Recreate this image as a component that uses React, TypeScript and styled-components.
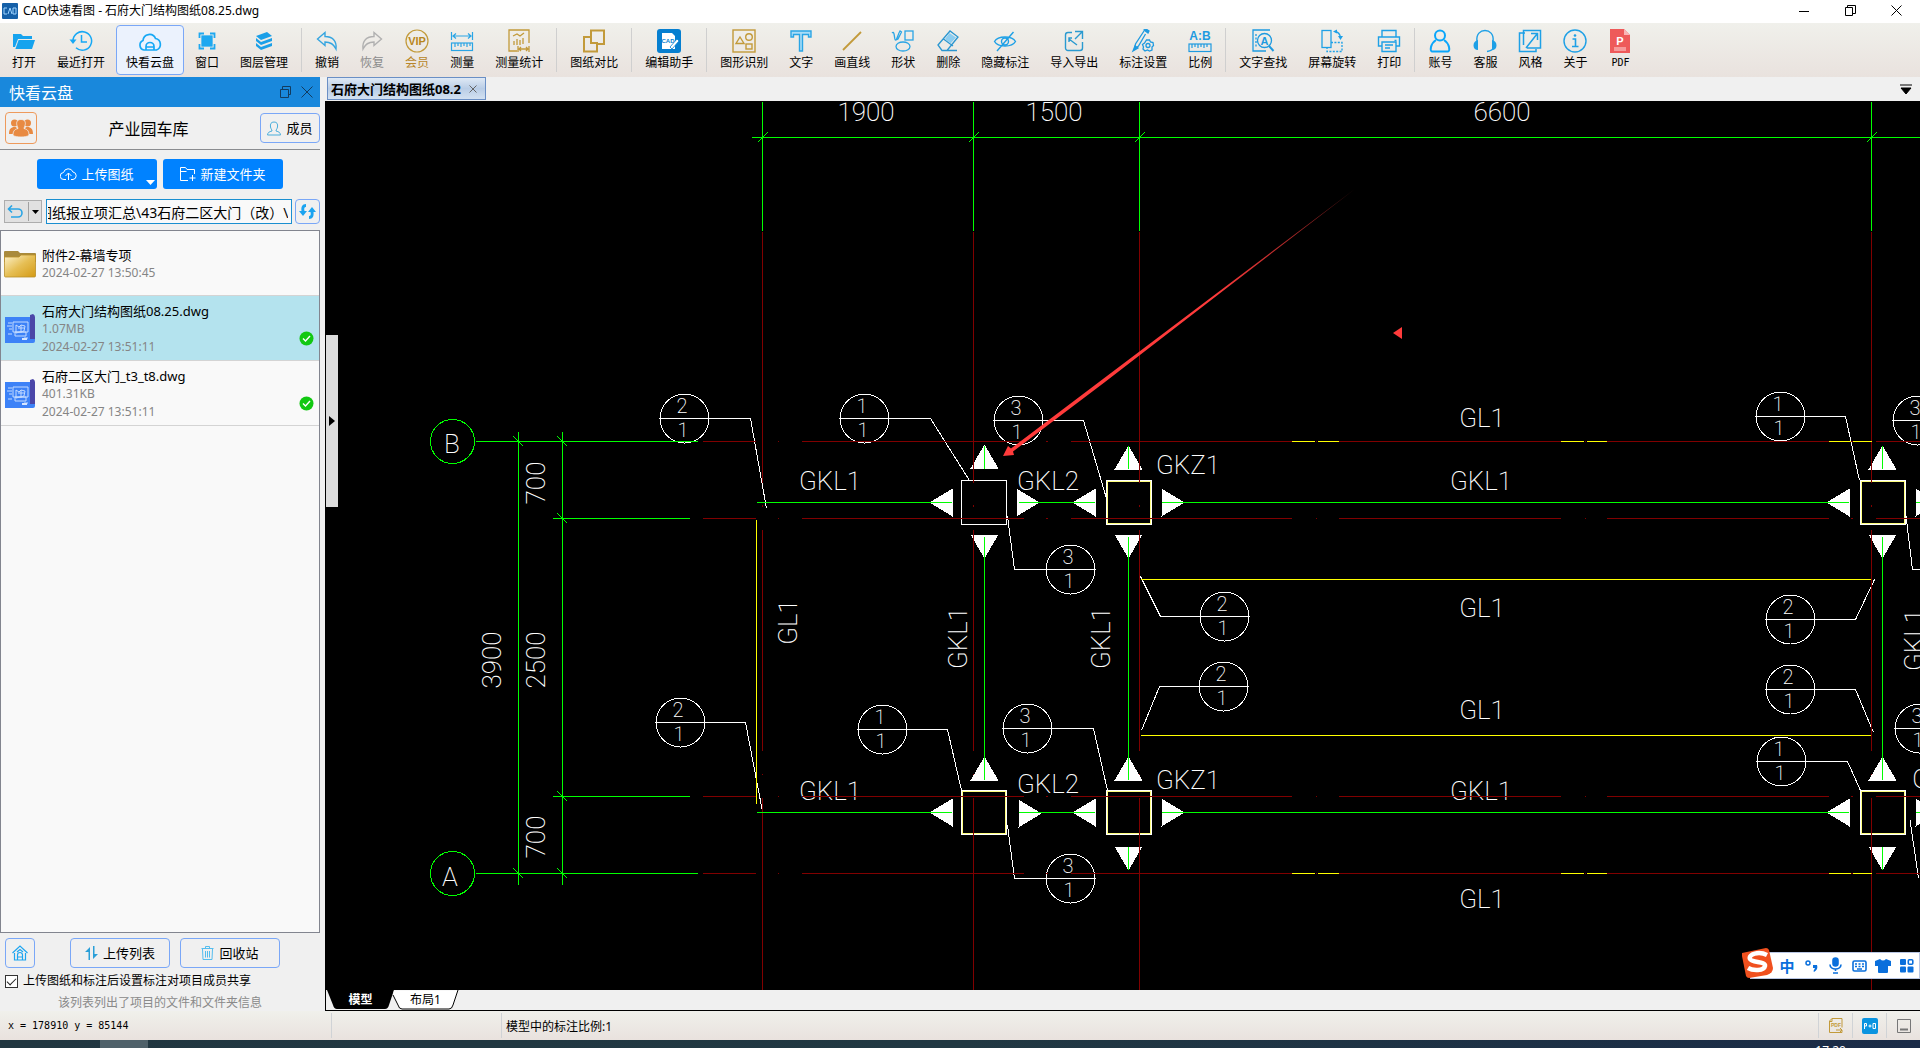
import React, { useEffect, useRef } from "react";
import styled, { createGlobalStyle, css } from "styled-components";

const ui = `"Noto Sans", "Noto Sans CJK SC", sans-serif`;
const mono = `"DejaVu Sans Mono", "Noto Sans CJK SC", monospace`;
const BLUE = "#1ea0e6";
const SKY = "#16a8f5";
const GOLD = "#c29a3a";

const Global = createGlobalStyle`
  * { box-sizing: border-box; }
  body { margin: 0; background: #f0f0f0; font-family: ${ui}; color: #000; }
  button { font: inherit; color: inherit; padding: 0; border: 0; background: none; cursor: default; }
  svg { display: block; flex: none; }
`;

const Window = styled.div`
  height: 100vh;
  display: grid;
  grid-template-rows: 23px 54px minmax(0, 1fr) 29px 8px;
  overflow: hidden;
`;

const TitleBar = styled.header`
  display: flex;
  align-items: center;
  gap: 5px;
  padding: 0 9px 2px 2px;
  background: #fff;
  font-size: 12px;
  line-height: 16px;
`;
const Title = styled.h1`
  flex: 1;
  margin: 0;
  font-size: 12px;
  font-weight: 400;
`;
const WindowButton = styled.button`
  width: 30px;
  height: 18px;
  margin-left: 11px;
  display: grid;
  place-items: center;
`;

const Toolbar = styled.nav`
  display: flex;
  align-items: center;
  gap: 1px;
  padding: 0 2px;
  background: linear-gradient(#f0f0eb, #e9e2de);
`;
const Tool = styled.button<{ $active?: boolean; $tone?: string }>`
  height: 50px;
  flex: none;
  padding: 3px 9px 0;
  display: flex;
  flex-direction: column;
  align-items: center;
  gap: 2px;
  border: 1px solid transparent;
  border-radius: 4px;
  font-family: ${ui};
  font-size: 12px;
  line-height: 16px;
  white-space: nowrap;
  color: ${(p) => p.$tone || "#000"};
  ${(p) => p.$active && css`background: #ebf2fd; border-color: #7aa7f7;`}
`;
const LatinLabel = styled.span`
  font-family: ${mono};
  font-size: 10px;
`;
const Divider = styled.span`
  width: 1px;
  height: 44px;
  margin: 0 2px;
  background: #cfcfcf;
`;

const Body = styled.div`
  display: grid;
  grid-template-columns: 320px minmax(0, 1fr);
  column-gap: 5px;
  min-height: 0;
`;

const Sidebar = styled.aside`
  display: flex;
  flex-direction: column;
  min-height: 0;
  background: #f0f0f0;
`;
const PanelHead = styled.div`
  height: 30px;
  display: flex;
  align-items: center;
  gap: 10px;
  padding: 0 7px 0 9px;
  background: #1988dc;
  color: #fff;
`;
const PanelTitle = styled.h2`
  flex: 1;
  margin: 0;
  font-size: 16px;
  font-weight: 400;
`;
const ProjectBar = styled.div`
  height: 43px;
  display: flex;
  align-items: center;
  justify-content: space-between;
  padding-left: 5px;
  border-bottom: 1px solid #8a8c90;
  font-size: 16px;
`;
const TeamButton = styled.button`
  width: 32px;
  height: 32px;
  display: grid;
  place-items: center;
  border: 1px solid #ee9a5c;
  border-radius: 4px;
`;
const OutlineButton = styled.button<{ $w: number; $h?: number }>`
  width: ${(p) => p.$w}px;
  height: ${(p) => p.$h || 30}px;
  display: flex;
  align-items: center;
  justify-content: center;
  gap: 5px;
  border: 1px solid #7aa7f7;
  border-radius: 4px;
  font-size: 13px;
  line-height: 18px;
  white-space: nowrap;
`;
const Actions = styled.div`
  display: flex;
  justify-content: center;
  gap: 6px;
  padding: 9px 0 10px;
`;
const PrimaryButton = styled.button`
  position: relative;
  width: 120px;
  height: 30px;
  display: flex;
  align-items: center;
  justify-content: center;
  gap: 4px;
  border-radius: 3px;
  background: #0082ff;
  color: #fff;
  font-size: 13px;
  line-height: 18px;
`;
const Caret = styled.svg`
  position: absolute;
  right: 2px;
  bottom: 4px;
`;
const PathRow = styled.div`
  display: flex;
  align-items: center;
  gap: 3px;
  padding: 0 0 6px 4px;
`;
const BackButton = styled.button`
  width: 38px;
  height: 23px;
  margin-right: 1px;
  display: flex;
  align-items: center;
  justify-content: space-around;
  border: 1px solid #adadad;
  background: #e1e1e1;
`;
const PathInput = styled.input`
  flex: 1;
  min-width: 0;
  height: 25px;
  padding: 0 3px 0 1px;
  border: 1px solid #1a8fd0;
  background: #f9f9f9;
  font-family: ${ui};
  font-size: 14px;
  color: #000;
  outline: 0;
`;
const FileList = styled.ul`
  flex: 1;
  min-height: 0;
  margin: 0;
  padding: 0;
  list-style: none;
  border: 1px solid #82858f;
  background: #f9f9f9;
`;
const FileItem = styled.li<{ $selected?: boolean }>`
  height: 65px;
  display: flex;
  align-items: center;
  gap: 6px;
  padding: 1px 5px 0 3px;
  border-bottom: 1px solid #d4d4d4;
  background: ${(p) => (p.$selected ? "#b4e3ee" : "transparent")};
`;
const FileText = styled.div`
  flex: 1;
  font-size: 13px;
  line-height: 18px;
`;
const Meta = styled.div`
  font-size: 12px;
  line-height: 18px;
  color: #858585;
`;
const TickWrap = styled.span`
  align-self: flex-end;
  padding-bottom: 14px;
`;
const SideFoot = styled.div`
  height: 78px;
  padding: 5px 5px 0;
`;
const FootButtons = styled.div`
  display: flex;
  gap: 10px;
  margin-bottom: 4px;
`;
const FootGap = styled.span`
  width: 15px;
`;
const ShareLabel = styled.label`
  display: flex;
  align-items: center;
  gap: 5px;
  font-size: 12px;
  line-height: 18px;
  white-space: nowrap;
`;
const Check = styled.input`
  appearance: none;
  width: 13px;
  height: 13px;
  margin: 0;
  border: 1px solid #333;
  background: #fff;
  display: grid;
  place-items: center;
  &:checked::before {
    content: "";
    width: 8px;
    height: 4px;
    margin-bottom: 2px;
    border-left: 1px solid #222;
    border-bottom: 1px solid #222;
    transform: rotate(-45deg);
  }
`;
const Hint = styled.p`
  margin: 4px 0 0;
  text-align: center;
  font-size: 12px;
  line-height: 18px;
  color: #8a8a8a;
`;

const Workspace = styled.main`
  display: grid;
  grid-template-rows: 24px minmax(0, 1fr) 21px;
  min-width: 0;
  min-height: 0;
`;
const DocTabs = styled.div`
  display: flex;
  align-items: flex-start;
  justify-content: space-between;
  padding-left: 2px;
`;
const DocTab = styled.div`
  height: 23px;
  display: flex;
  align-items: center;
  gap: 8px;
  padding: 0 8px 0 3px;
  border: 1px solid #6a8fc5;
  background: linear-gradient(#dfe9f5, #b9cde6 50%, #d3e1f1);
  font-size: 13px;
  font-weight: 700;
  white-space: nowrap;
`;
const TabMenu = styled.button`
  width: 20px;
  height: 24px;
  margin-right: 4px;
  display: grid;
  place-items: center;
`;
const Canvas = styled.section`
  position: relative;
  overflow: hidden;
  background: #000;
`;
const SplitHandle = styled.button`
  position: absolute;
  left: 1px;
  top: 234px;
  width: 12px;
  height: 172px;
  background: #dcdcdc;
  display: grid;
  place-items: center;
`;
const Ime = styled.div`
  position: absolute;
  right: 0;
  bottom: 11px;
  height: 27px;
  display: flex;
  align-items: center;
  gap: 8px;
  padding: 0 4px 0 28px;
  border: 1px solid #b9c6e4;
  background: #fff;
  color: #0a6fdc;
`;
const ImeLogo = styled.svg`
  position: absolute;
  left: -10px;
  top: -6px;
`;
const ImeKey = styled.button`
  width: 16px;
  height: 20px;
  display: grid;
  place-items: center;
  font-size: 15px;
  font-weight: 700;
  line-height: 20px;
`;
const LayoutTabs = styled.div`
  display: flex;
  padding-left: 1px;
  border-left: 1px solid #000;
  border-bottom: 1px solid #000;
  background: #f0f0f0;
`;
const LayoutTab = styled.button<{ $on?: boolean }>`
  position: relative;
  width: 67px;
  height: 20px;
  margin-right: -2px;
  font-size: 12px;
  line-height: 18px;
  font-weight: ${(p) => (p.$on ? 700 : 400)};
  color: ${(p) => (p.$on ? "#fff" : "#000")};
`;
const TabShape = styled.svg`
  position: absolute;
  inset: 0;
`;
const TabText = styled.span`
  position: relative;
`;

const Status = styled.footer`
  display: grid;
  grid-template-columns: 331px 170px minmax(0, 1fr) repeat(3, 34px);
  align-items: center;
  background: linear-gradient(#f0f0eb, #e9e2de);
`;
const Cell = styled.div<{ $mono?: boolean; $center?: boolean; $line?: boolean }>`
  height: 25px;
  display: flex;
  align-items: center;
  justify-content: ${(p) => (p.$center ? "center" : "flex-start")};
  padding-left: ${(p) => (p.$mono ? 8 : p.$center ? 0 : 4)}px;
  border-left: ${(p) => (p.$line ? "1px solid #d0d3d6" : "0")};
  font-family: ${(p) => (p.$mono ? mono : ui)};
  font-size: ${(p) => (p.$mono ? 10 : 12)}px;
  white-space: pre;
`;
const Taskbar = styled.div`
  display: flex;
  justify-content: space-between;
  overflow: hidden;
  padding: 0 74px 0 100px;
  background: linear-gradient(90deg, #213640, #213842 50%, #1a2b47);
`;
const TaskItem = styled.span`
  width: 48px;
  background: #4f616a;
`;
const Clock = styled.time`
  padding-top: 3px;
  font-size: 12px;
  line-height: 16px;
  color: #fff;
`;

/* ---------- icons ---------- */
type P = { c?: string; s?: number; w?: number; children?: React.ReactNode };
const I = ({ c = BLUE, s = 24, w = 1.4, children }: P) => (
  <svg width={s} height={s} viewBox="0 0 24 24" fill="none" stroke={c} strokeWidth={w} aria-hidden="true">
    {children}
  </svg>
);
const iconText = (t: string, x: number, y: number, size: number, fill: string) => (
  <text x={x} y={y} fontSize={size} fill={fill} stroke="none" fontWeight="700" textAnchor="middle" fontFamily="Liberation Sans, sans-serif">{t}</text>
);

const icons: Record<string, React.ReactNode> = {
  open: <I c="none"><path fill="#16a3ee" d="M1 5h8l2 2h9v3H6L3 18H1z" /><path fill="#16a3ee" d="M6.600 11H23l-3 9H3.400z" /></I>,
  recent: <I c={SKY} w={1.5}><path d="M4 12a9.300 9.300 0 1 1 3 6.800M12.500 6v7h5.500" /><path d="M.5 10.500h7L4 15z" fill={SKY} stroke="none" /></I>,
  cloud: <I c={SKY} w={1.7}><path d="M6 21a5 5 0 0 1-1-9.500A6.500 6.500 0 0 1 17.500 9.500 6 6 0 0 1 18.500 21zM8 20.500v-3a4 4 0 0 1 8 0v3M8.500 18h7" /></I>,
  win: <I c="#1ea8f0" w={1.3}><rect x="7" y="7" width="10" height="10" fill="#1ea8f0" /><path d="M4.500 9V4.500H9M15 4.500h4.500V9M19.500 15v4.500H15M9 19.500H4.500V15" strokeWidth="1.800" /></I>,
  layers: <I c="none"><path fill="#1a9fe8" d="M4 7l11-4 5 4-11 4z" /><path fill="#1a9fe8" d="M4 9l5 4 11-4v3L9 16l-5-4zM4 14l5 4 11-4v3L9 21l-5-4z" /></I>,
  undo: <I c="#35a5e0"><path d="M2.500 10L10 3.500v4c7 0 12 4 11 12.500-2-4.500-5-7-11-7v3.500z" /></I>,
  redo: <I c="#b0b0b0"><path d="M21.500 10L14 3.500v4C7 7.500 2 11.500 3 20c2-4.500 5-7 11-7v3.500z" /></I>,
  vip: <I c={GOLD} w={1.2}><circle cx="12" cy="12" r="11" />{iconText("VIP", 12, 16, 11, "#b8871d")}</I>,
  measure: <I c="#2aa5e5" w={1.2}><path d="M1.500 3v8M22.500 3v8M3 7h18M6 4.500L3 7l3 2.500M18 4.500L21 7l-3 2.500" /><rect x="1.500" y="14" width="21" height="7.500" /><path d="M5 14v4M8 14v3M11 14v4M14 14v3M17 14v4M20 14v3" /></I>,
  stats: <I c={GOLD} w={1.3}><path d="M10 22H2V1h20v13M6 7l4-2 3 2 4-3M7 16v-4M10 16v-6M13 16v-5M16 15v-6M11 17v6M22 17v6M12 20h9M14 18l-2 2 2 2M19 18l2 2-2 2" /></I>,
  compare: <I c={GOLD} w={2}><path d="M9 14V1.500h13V15h-6" /><path d="M9 8H2v14.500h13V14H9z" /></I>,
  editor: <I c="none"><rect x="0" y="0" width="24" height="24" rx="3" fill="#067fd0" /><path d="M5 4h10l3 3v13H5z" fill="#fff" />{iconText("CAD", 11, 14, 6, "#067fd0")}<path d="M13 18l7-8 2 2-7 8z" fill="#fff" stroke="#067fd0" strokeWidth=".8" /></I>,
  recog: <I c={GOLD} w={1.4}><rect x="1" y="1" width="22" height="22" /><path d="M8 8l4 6.500H4z" /><circle cx="17" cy="8" r="3.300" /><rect x="14" y="15" width="6" height="5" /></I>,
  text: <I c="#2aa5e5"><path d="M2 2h20v6h-2.500V5.500h-6V22h-3V5.500h-6V8H2z" fill="#a9dcf7" /></I>,
  line: <I c={GOLD} w={1.8}><path d="M3 21L21 3" /></I>,
  shape: <I c="#2aa5e5" w={1.3}><rect x="14" y="2" width="8" height="9" /><ellipse cx="12" cy="17.500" rx="7" ry="4.500" /><path d="M1 4c3-3 2 7 3.500 7S7 5 9 2l1.500 1L7 10l-2 1" /></I>,
  erase: <I c="#2a96d0" w={1.3}><path d="M2 16L14 2l8 6-11 13.500H6zM7.500 10L17 17M11 21.500h10" /><path d="M13.500 4L20 8.500l-5.500 6L9 10z" fill="#8ccdf0" stroke="none" /></I>,
  hide: <I><path d="M1.500 12.500C5 6.500 19 6.500 22.500 12.500 19 18.500 5 18.500 1.500 12.500zM4 22L20.500 3" /><circle cx="12" cy="12.500" r="3.500" /></I>,
  io: <I c="#2a9ad0"><path d="M10 3.500H6a2.500 2.500 0 0 0-2.500 2.500v13A2.500 2.500 0 0 0 6 21.500h12a2.500 2.500 0 0 0 2.500-2.500v-6M13 2.500h7.500V10M20 3l-7 7M7 10l8 6M10 9H7v4" /></I>,
  mark: <I c="#1e9ae0" w={1.3}><path d="M13 2L4.500 15l-1 5 4-3 7-12" /><path d="M2 22l2-5 3 2zM13 1l4 3 1-2-3-2z" fill="#1e9ae0" /><path d="M15.500 11h3l1 2 2.500.5.5 3-1.500 1.500v3l-2.500 1-2-1-2.500 1-2-2 .5-2-1-2.500 2-1.500z" /><circle cx="17" cy="16.500" r="2" /></I>,
  ratio: <I c="#1e9ae0" w={1.2}><rect x="1" y="15" width="22" height="7.500" /><path d="M4 15v4M7 15v3M10 15v4M13 15v3M16 15v4M19 15v3" />{iconText("A:B", 12, 11, 12, "#1e9ae0")}</I>,
  find: <I c="#1e9ae0" w={1.3}><path d="M19 1H2v21h13" /><path d="M5 5v14" strokeDasharray="2 1.500" /><circle cx="13.500" cy="11.500" r="7" /><path d="M18 17l4.500 5" strokeWidth="2" />{iconText("A", 13.5, 15.5, 11, "#1e9ae0")}</I>,
  rotate: <I w={1.3}><rect x="2" y="1.500" width="9" height="17" /><path d="M11 13.500h11v9H7v-4" strokeDasharray="2 1.400" /><path d="M15 2.500c3 .5 5 2.500 5.500 6" /><path d="M13 2.500l4-2v4zM18 7h5l-2.500 4z" fill={BLUE} stroke="none" /></I>,
  print: <I><path d="M5 8V1.500h14V8M5 17H1.500V8h21v9H19M17.500 11.500h2" /><path d="M5 13h14v9.500H5zM8 16h8M8 19h5" /></I>,
  user: <I c="#0aa6fa" w={2}><circle cx="12" cy="6.500" r="5" /><path d="M8 11c-6 4-6 11-4 11.500h16c2-.5 2-7.500-4-11.500" /></I>,
  phone: <I><path d="M4 12C2 -2 22 -2 20 12M21 18c-1 3-3 4-7 4.500" /><path d="M5 11v10c-6 0-6-9 0-10zM19 11v10c6 0 6-9 0-10z" fill={BLUE} stroke="none" /></I>,
  style: <I w={1.5}><path d="M7 4H1.500v18.500H18V20" /><path d="M5.500 16V1.500h17v17.500H9M8 19L19 5M13 4.500h6.500V11" /></I>,
  about: <I><circle cx="12" cy="12" r="11" /><path d="M9.500 10h3v7.500M9 17.500h6.500" strokeWidth="1.600" /><circle cx="12" cy="6.500" r="1.300" fill={BLUE} stroke="none" /></I>,
  pdf: <I c="none"><path d="M2 0h14l6 6v18H2z" fill="#ee5a5a" /><path d="M16 0v6h6z" fill="#f9b5b5" /><rect x="6" y="18" width="12" height="4" fill="#f69a9a" />{iconText("P", 12, 16, 11, "#fff")}</I>,
};

type T = { i: string; t: string; active?: boolean; tone?: string; latin?: boolean };
const groups: T[][] = [
  [{ i: "open", t: "打开" }, { i: "recent", t: "最近打开" }, { i: "cloud", t: "快看云盘", active: true }, { i: "win", t: "窗口" }, { i: "layers", t: "图层管理" }],
  [{ i: "undo", t: "撤销" }, { i: "redo", t: "恢复", tone: "#8c8c8c" }, { i: "vip", t: "会员", tone: "#b8862a" }, { i: "measure", t: "测量" }, { i: "stats", t: "测量统计" }],
  [{ i: "compare", t: "图纸对比" }],
  [{ i: "editor", t: "编辑助手" }],
  [{ i: "recog", t: "图形识别" }, { i: "text", t: "文字" }, { i: "line", t: "画直线" }, { i: "shape", t: "形状" }, { i: "erase", t: "删除" }, { i: "hide", t: "隐藏标注" }, { i: "io", t: "导入导出" }, { i: "mark", t: "标注设置" }, { i: "ratio", t: "比例" }],
  [{ i: "find", t: "文字查找" }, { i: "rotate", t: "屏幕旋转" }, { i: "print", t: "打印" }],
  [{ i: "user", t: "账号" }, { i: "phone", t: "客服" }, { i: "style", t: "风格" }, { i: "about", t: "关于" }, { i: "pdf", t: "PDF", latin: true }],
];

const FolderIcon = () => (
  <svg width="32" height="28" viewBox="0 0 32 28" aria-hidden="true">
    <defs>
      <linearGradient id="fold" x1="0" y1="0" x2="1" y2="1">
        <stop offset="0" stopColor="#fdf3cf" /><stop offset=".5" stopColor="#e6bf55" /><stop offset="1" stopColor="#d49a14" />
      </linearGradient>
    </defs>
    <path d="M0 2q0-1 1-1h13l2 2h15q1 0 1 1v8H0z" fill="#a98a3c" />
    <path d="M.5 7h14.500l2-2h14.500v21q0 1-1 1h-29q-1 0-1-1z" fill="url(#fold)" stroke="#b98f2a" strokeWidth=".8" />
  </svg>
);
const DwgIcon = () => (
  <svg width="32" height="30" viewBox="0 0 32 30" aria-hidden="true">
    <path d="M1 3h26v26H1z" fill="#3d82f7" />
    <path d="M26 1l3-1q2 1 2 3v22l-3 2h-2z" fill="#4b46a8" />
    <path d="M26 25h5v2q0 2-2 2h-3z" fill="#3d82f7" />
    <path d="M9 8h15v10H9zM12 11l3 2 2-2 4 1-1 5-8 2zM4 9h4M3 12h5M4 20h4M20 24h4M5 15h3M14 14h6M17 11v8M11 18h11v4H11z" fill="none" stroke="#c4dbff" />
    <path d="M18 24h5v2h-5z" fill="#d6e6ff" />
  </svg>
);
const Tick = () => (
  <svg width="15" height="15" viewBox="0 0 15 15" aria-hidden="true">
    <circle cx="7.500" cy="7.500" r="7" fill="#12c812" />
    <path d="M4 7.500L6.500 10 11 5" fill="none" stroke="#fff" strokeWidth="1.400" />
  </svg>
);

/* ---------- drawing ---------- */
const G = "#00ff00";
const R = "#800000";
const Y = "#ffff00";
const W = "#ffffff";

const Seg = ({ x1, y1, x2, y2, c = W }: { x1: number; y1: number; x2: number; y2: number; c?: string }) => (
  <line x1={x1 + 0.5} y1={y1 + 0.5} x2={x2 + 0.5} y2={y2 + 0.5} stroke={c} />
);

type BubbleData = { x: number; y: number; n: string; leader?: [number, number][] };
const bubbles: BubbleData[] = [
  { x: 684, y: 418, n: "2", leader: [[750, 418], [766, 508]] },
  { x: 864, y: 418, n: "1", leader: [[930, 418], [969, 480]] },
  { x: 1018, y: 420, n: "3", leader: [[1083, 420], [1106, 498]] },
  { x: 1070, y: 569, n: "3", leader: [[1014, 569], [1007, 516]] },
  { x: 1224, y: 616, n: "2", leader: [[1160, 616], [1140, 576]] },
  { x: 1223, y: 686, n: "2", leader: [[1159, 686], [1141, 730]] },
  { x: 680, y: 722, n: "2", leader: [[745, 722], [762, 811]] },
  { x: 882, y: 729, n: "1", leader: [[947, 729], [961, 790]] },
  { x: 1027, y: 728, n: "3", leader: [[1093, 728], [1107, 790]] },
  { x: 1070, y: 878, n: "3", leader: [[1014, 878], [1007, 825]] },
  { x: 1780, y: 416, n: "1", leader: [[1845, 416], [1859, 480]] },
  { x: 1917, y: 420, n: "3" },
  { x: 1790, y: 619, n: "2", leader: [[1855, 619], [1874, 579]] },
  { x: 1790, y: 689, n: "2", leader: [[1855, 689], [1873, 732]] },
  { x: 1781, y: 761, n: "1", leader: [[1847, 761], [1860, 790]] },
  { x: 1919, y: 728, n: "3" },
];

const CadText = styled.text<{ $size: number }>`
  font-family: Roboto, "Liberation Sans", sans-serif;
  font-weight: 200;
  font-size: ${(p) => p.$size}px;
  fill: #fff;
  text-anchor: middle;
`;
const labels: [string, number, number][] = [
  ["1900", 866, 121], ["1500", 1054, 121], ["6600", 1502, 121],
  ["GKL1", 830, 490], ["GKL1", 830, 800], ["GKL1", 1481, 490], ["GKL1", 1481, 800],
  ["GKL2", 1048, 490], ["GKL2", 1048, 793], ["GKZ1", 1188, 474], ["GKZ1", 1188, 789],
  ["GL1", 1482, 427], ["GL1", 1482, 617], ["GL1", 1482, 719], ["GL1", 1482, 908], ["GKL2", 1943, 788],
];
const turned: [string, number, number][] = [
  ["700", 545, 483], ["2500", 545, 660], ["3900", 501, 660], ["700", 545, 837],
  ["GL1", 797, 622], ["GKL1", 967, 638], ["GKL1", 1110, 638], ["GKL1", 1923, 640],
];

const arrowPath: Record<string, (x: number, y: number) => string> = {
  left: (x, y) => `M${x} ${y}l23-14v28z`,
  right: (x, y) => `M${x} ${y}l-23-14v28z`,
  up: (x, y) => `M${x} ${y}l-14 24h28z`,
  down: (x, y) => `M${x} ${y}l-14-24h28z`,
};
const heads: [string, number, number][] = [
  ["left", 929, 502], ["right", 1039, 502], ["left", 1072, 502], ["right", 1184, 502], ["left", 1826, 502], ["right", 1938, 502],
  ["left", 929, 812], ["right", 1041, 813], ["left", 1072, 812], ["right", 1184, 812], ["left", 1826, 812], ["right", 1938, 812],
  ["up", 984, 444], ["up", 1128, 445], ["up", 1882, 445], ["down", 984, 558], ["down", 1128, 558], ["down", 1882, 558],
  ["up", 984, 756], ["up", 1128, 756], ["up", 1882, 756], ["down", 1128, 870], ["down", 1882, 870],
];
const columns: [number, number, boolean][] = [
  [961, 480, false], [1106, 480, true], [1860, 480, true], [961, 790, true], [1106, 790, true], [1860, 790, true],
];
const rowSegs: [number, number][] = [
  [702, 755], [777, 778], [801, 1023], [1045, 1047], [1070, 1291], [1315, 1316], [1338, 1560], [1584, 1585], [1606, 1828], [1850, 1852], [1875, 1925],
];
const colSegs: [number, number][] = [[231, 482], [504, 506], [529, 750], [773, 774], [797, 992]];
const yellowSegs: [number, number][] = [[1291, 1314], [1317, 1338], [1560, 1583], [1586, 1606], [1828, 1850], [1852, 1871]];

const Drawing = () => (
  <svg width="1595" height="889" viewBox="325 101 1595 889" role="img" aria-label="结构平面图" shapeRendering="crispEdges" fill="none">
    {columns.map(([x, y, gold], k) => (
      <g key={k}>
        <rect x={x + 0.5} y={y + 0.5} width="45" height="44" stroke={W} />
        {gold && <rect x={x + 1.5} y={y + 1.5} width="43" height="42" stroke="#ffff80" />}
      </g>
    ))}
    {heads.map(([d, x, y], k) => <path key={k} d={arrowPath[d](x + 0.5, y + 0.5)} fill={W} />)}
    {bubbles.map((b, k) => (
      <g key={k} stroke={W}>
        <circle cx={b.x + 0.5} cy={b.y + 0.5} r="24.500" />
        <path d={`M${b.x - 24} ${b.y + 0.5}h49`} />
        {b.leader && (
          <polyline points={[[b.leader[0][0] > b.x ? b.x + 24 : b.x - 24, b.y], ...b.leader].map(([x, y]) => `${x + 0.5},${y + 0.5}`).join(" ")} />
        )}
      </g>
    ))}
    <path d="M1906 516L1912.500 569.500H1920M1910 820L1918.500 878" stroke={W} />
    {bubbles.map((b, k) => (
      <g key={k}>
        <CadText $size={20} x={b.x - 2} y={b.y - 5}>{b.n}</CadText>
        <CadText $size={20} x={b.x - 1} y={b.y + 19}>1</CadText>
      </g>
    ))}
    {labels.map(([t, x, y], k) => <CadText key={k} $size={26} x={x} y={y}>{t}</CadText>)}
    {turned.map(([t, x, y], k) => (
      <CadText key={k} $size={26} transform={`translate(${x} ${y}) rotate(-90)`}>{t}</CadText>
    ))}

    {[441, 518, 796, 873].map((y) => rowSegs.map(([a, b]) => <Seg key={`${y}-${a}`} x1={a} y1={y} x2={b} y2={y} c={R} />))}
    {[762, 973, 1139, 1871].map((x) => colSegs.map(([a, b]) => <Seg key={`${x}-${a}`} x1={x} y1={a} x2={x} y2={b} c={R} />))}
    {[441, 873].map((y) => yellowSegs.map(([a, b]) => <Seg key={`${y}-${a}`} x1={a} y1={y} x2={b} y2={y} c={Y} />))}

    <Seg x1={751} y1={137} x2={1920} y2={137} c={G} />
    {[762, 973, 1139, 1871].map((x) => (
      <g key={x}>
        <Seg x1={x} y1={101} x2={x} y2={230} c={G} />
        <Seg x1={x - 5} y1={142} x2={x + 5} y2={132} c={G} />
      </g>
    ))}
    {[441, 873].map((y) => (
      <g key={y}>
        <circle cx="452.500" cy={y + 0.5} r="22" stroke={G} />
        <Seg x1={475} y1={y} x2={697} y2={y} c={G} />
      </g>
    ))}
    {[518, 796].map((y) => <Seg key={y} x1={552} y1={y} x2={689} y2={y} c={G} />)}
    {[518, 562].map((x) => <Seg key={x} x1={x} y1={431} x2={x} y2={884} c={G} />)}
    {[[518, 441], [562, 441], [562, 518], [562, 796], [518, 873], [562, 873]].map(([x, y]) => (
      <Seg key={`${x}-${y}`} x1={x - 5} y1={y - 5} x2={x + 5} y2={y + 5} c={G} />
    ))}
    <CadText $size={26} x={452} y={453}>B</CadText>
    <CadText $size={26} x={450} y={886}>A</CadText>

    {[502, 812].map((y) => [[756, 951], [1018, 1094], [1161, 1848], [1915, 1920]].map(([a, b]) => (
      <Seg key={`${y}-${a}`} x1={a} y1={y} x2={b} y2={y} c={G} />
    )))}
    {[984, 1128, 1882].map((x) => (
      <g key={x}>
        <Seg x1={x} y1={445} x2={x} y2={468} c={G} />
        <Seg x1={x} y1={536} x2={x} y2={779} c={G} />
        {x > 1000 && <Seg x1={x} y1={846} x2={x} y2={869} c={G} />}
      </g>
    ))}
    <Seg x1={756} y1={519} x2={756} y2={803} c={Y} />
    {[579, 735].map((y) => <Seg key={y} x1={1140} y1={y} x2={1870} y2={y} c={Y} />)}

    <g shapeRendering="auto">
      <defs>
        <linearGradient id="redfade" gradientUnits="userSpaceOnUse" x1="1355" y1="189" x2="1003" y2="456">
          <stop offset="0" stopColor="#ff3b3b" stopOpacity=".4" />
          <stop offset=".4" stopColor="#ff3b3b" />
          <stop offset="1" stopColor="#ff3b3b" />
        </linearGradient>
      </defs>
      <path d="M1003 456L1008 446L1011 448.500L1103 379L1355 189L1105 382L1013 451.500L1014 455Z" fill="url(#redfade)" />
      <path d="M1393 333l9-6v12z" fill="#ff3b3b" />
    </g>
  </svg>
);

/* The path box keeps its end in view, as the folder that is open is named last. */
const PathBox = () => {
  const box = useRef<HTMLInputElement>(null);
  useEffect(() => {
    if (box.current) box.current.scrollLeft = box.current.scrollWidth;
  }, []);
  return <PathInput ref={box} aria-label="路径" readOnly defaultValue="图纸报立项汇总\43石府二区大门（改）\" />;
};

const files = [
  { name: "附件2-幕墙专项", date: "2024-02-27 13:50:45" },
  { name: "石府大门结构图纸08.25.dwg", size: "1.07MB", date: "2024-02-27 13:51:11", selected: true },
  { name: "石府二区大门_t3_t8.dwg", size: "401.31KB", date: "2024-02-27 13:51:11" },
];

export default function App() {
  return (
    <>
      <Global />
      <Window>
        <TitleBar>
          <svg width="16" height="16" viewBox="0 0 16 16" aria-hidden="true">
            <rect width="16" height="16" rx="1" fill="#1560a8" />
            <path d="M5 5H2v6h3M6 11l2-6 2 6M11 5v6h3V5z" fill="none" stroke="#9fd4ff" />
          </svg>
          <Title>CAD快速看图 - 石府大门结构图纸08.25.dwg</Title>
          <WindowButton aria-label="最小化"><svg width="10" height="10"><path d="M0 5.500h10" stroke="#000" /></svg></WindowButton>
          <WindowButton aria-label="还原">
            <svg width="11" height="11" fill="none" stroke="#000"><path d="M.5 2.500h7v8h-7zM2.500 2.500v-2h8v8h-3" /></svg>
          </WindowButton>
          <WindowButton aria-label="关闭"><svg width="11" height="11" stroke="#000"><path d="M.5.500l10 10M10.500.500l-10 10" /></svg></WindowButton>
        </TitleBar>

        <Toolbar>
          {groups.map((g, k) => (
            <React.Fragment key={k}>
              {k > 0 && <Divider />}
              {g.map((b) => (
                <Tool key={b.t} $active={b.active} $tone={b.tone}>
                  {icons[b.i]}
                  {b.latin ? <LatinLabel>{b.t}</LatinLabel> : b.t}
                </Tool>
              ))}
            </React.Fragment>
          ))}
        </Toolbar>

        <Body>
          <Sidebar>
            <PanelHead>
              <PanelTitle>快看云盘</PanelTitle>
              <button aria-label="浮动"><svg width="11" height="12" fill="none" stroke="#123c60"><path d="M.5 3.500h8v8h-8zM2.500 3.500v-3h8v8h-2" /></svg></button>
              <button aria-label="关闭面板"><svg width="12" height="12" stroke="#123c60"><path d="M.5.500l11 11M11.500.500l-11 11" /></svg></button>
            </PanelHead>
            <ProjectBar>
              <TeamButton aria-label="团队">
                <svg width="24" height="20" viewBox="0 0 24 20" fill="#e88a42">
                  <circle cx="5.500" cy="5" r="3.500" /><circle cx="18.500" cy="5" r="3.500" />
                  <path d="M0 16c0-5 2-7 5.500-7S8 11 8 16zM24 16c0-5-2-7-5.500-7S16 11 16 16z" />
                  <path d="M12 1.500c4 0 5 3 4 6-.5 2-1 2-1 3 4 1 5 3 5 7-4 2-12 2-16 0 0-4 1-6 5-7 0-1-.5-1-1-3-1-3 0-6 4-6z" stroke="#f0f0f0" strokeWidth=".8" />
                </svg>
              </TeamButton>
              产业园车库
              <OutlineButton $w={60}>
                <svg width="14" height="15" viewBox="0 0 14 15" fill="none" stroke="#4aaedb"><path d="M7 1c3 0 4 2 3.500 5-.3 2-1.500 2.500-1.500 4 3 1 4 1 4.500 4H.5C1 11 2 11 5 10c0-1.500-1.200-2-1.500-4C3 3 4 1 7 1z" /></svg>
                成员
              </OutlineButton>
            </ProjectBar>
            <Actions>
              <PrimaryButton>
                <svg width="17" height="14" viewBox="0 0 17 14" fill="none" stroke="#fff"><path d="M6 12.500H4a3.500 3.500 0 0 1-.5-7A5 5 0 0 1 13 5a3.800 3.800 0 0 1 0 7.500h-2M8.500 13V6M5.500 9l3-3 3 3" /></svg>
                上传图纸
                <Caret width="9" height="5" aria-hidden="true"><path d="M0 0h9L4.500 5z" fill="#fff" /></Caret>
              </PrimaryButton>
              <PrimaryButton>
                <svg width="16" height="14" viewBox="0 0 16 14" fill="none" stroke="#fff"><path d="M8 13.500H.5V.500h5l1.500 2h7.500V7M.5 4.500h6M12.500 8v6M9.500 11h6" /></svg>
                新建文件夹
              </PrimaryButton>
            </Actions>
            <PathRow>
              <BackButton aria-label="返回">
                <svg width="16" height="13" viewBox="0 0 16 13" fill="none" stroke="#2aa5e5" strokeWidth="1.600"><path d="M5 .5L1.500 4 5 7.500M1.500 4H11a4 4 0 0 1 0 8H4" /></svg>
                <svg width="12" height="19"><path d="M1.500 0v19" stroke="#a0a0a0" /><path d="M5 8h7l-3.500 4z" fill="#000" /></svg>
              </BackButton>
              <PathBox />
              <OutlineButton $w={25} $h={25} aria-label="刷新">
                <svg width="17" height="17" viewBox="0 0 17 17" fill="#1aa3f0"><path d="M7 1v3C5 4 5 6 5.500 8H8l-4 5-4-5h2.500C2 4 3 1 7 1zM10 16v-3c2 0 2-2 1.500-4H9l4-5 4 5h-2.500c.5 4-.5 7-4.500 7z" /></svg>
              </OutlineButton>
            </PathRow>
            <FileList>
              {files.map((f) => (
                <FileItem key={f.name} $selected={f.selected}>
                  {f.size ? <DwgIcon /> : <FolderIcon />}
                  <FileText>
                    {f.name}
                    {f.size && <Meta>{f.size}</Meta>}
                    <Meta>{f.date}</Meta>
                  </FileText>
                  {f.size && <TickWrap><Tick /></TickWrap>}
                </FileItem>
              ))}
            </FileList>
            <SideFoot>
              <FootButtons>
                <OutlineButton $w={30} aria-label="主页">
                  <svg width="16" height="16" viewBox="0 0 16 16" fill="none" stroke="#1ea5f0" strokeWidth="1.200"><path d="M.5 8L8 1l7.500 7M2.500 8v7h11V8M5.500 15v-5a2.500 2.500 0 0 1 5 0v5M5.500 12h5M5 7l3-2.500L11 7" /></svg>
                </OutlineButton>
                <FootGap />
                <OutlineButton $w={100}>
                  <svg width="13" height="14" viewBox="0 0 13 14" fill="#2a9fd8"><path d="M5 1v13H3.500V6H0zM8 0v13l5-5H9.500V0z" /></svg>
                  上传列表
                </OutlineButton>
                <OutlineButton $w={100}>
                  <svg width="13" height="14" viewBox="0 0 13 14" fill="none" stroke="#55bdee"><path d="M.5 2.500h12M4.500 2V.500h4V2M1.500 3l.5 10.500h9L11.500 3M4.500 5v6.500M6.500 5v6.500M8.500 5v6.500" /></svg>
                  回收站
                </OutlineButton>
              </FootButtons>
              <ShareLabel>
                <Check type="checkbox" defaultChecked />
                上传图纸和标注后设置标注对项目成员共享
              </ShareLabel>
              <Hint>该列表列出了项目的文件和文件夹信息</Hint>
            </SideFoot>
          </Sidebar>

          <Workspace>
            <DocTabs>
              <DocTab>
                石府大门结构图纸08.2
                <button aria-label="关闭图纸"><svg width="8" height="8" stroke="#666"><path d="M.5.500l7 7M7.500.500l-7 7" /></svg></button>
              </DocTab>
              <TabMenu aria-label="图纸列表"><svg width="12" height="11"><path d="M0 1h12M1 4h10l-5 6z" stroke="#000" fill="#000" /></svg></TabMenu>
            </DocTabs>
            <Canvas>
              <Drawing />
              <SplitHandle aria-label="收起面板"><svg width="6" height="10"><path d="M0 0v10l6-5z" fill="#000" /></svg></SplitHandle>
              <Ime>
                <ImeLogo width="33" height="32" viewBox="0 0 33 32" aria-hidden="true">
                  <path d="M1 6L25 1q2 0 3 2l4 18q0 5-6 7l-18 3q-2 0-3-2L1 9z" fill="#f0501e" />
                  <path d="M26 8C18 4 7 7 9 12c2 4 16 2 15 7-1 5-12 5-17 2" fill="none" stroke="#fff" strokeWidth="4.500" />
                </ImeLogo>
                <ImeKey>中</ImeKey>
                <ImeKey aria-label="标点">
                  <svg width="13" height="12"><circle cx="3" cy="3" r="2" fill="none" stroke="#0a6fdc" strokeWidth="1.500" /><path d="M8 5h4c1 3 0 5-3 7l-.5-1 1.500-3H8z" fill="#0a6fdc" /></svg>
                </ImeKey>
                <ImeKey aria-label="语音">
                  <svg width="13" height="17" fill="none" stroke="#0a6fdc" strokeWidth="1.600"><rect x="4" y="1" width="5" height="8" rx="2.500" fill="#0a6fdc" /><path d="M1 7.500c0 6 11 6 11 0M6.500 12v2M4 16h5" /></svg>
                </ImeKey>
                <ImeKey aria-label="软键盘">
                  <svg width="15" height="12" fill="none" stroke="#0a6fdc" strokeWidth="1.600"><rect x="1" y="1" width="13" height="10" rx="1.500" /><path d="M3 4h2M6.500 4h2M10 4h2M3 6.500h2M6.500 6.500h2M10 6.500h2M5 9h5" /></svg>
                </ImeKey>
                <ImeKey aria-label="皮肤">
                  <svg width="16" height="14" fill="#0a6fdc"><path d="M0 2l5-2q3 3 6 0l5 2v5h-3v6q0 1-1 1H4q-1 0-1-1V7H0z" /></svg>
                </ImeKey>
                <ImeKey aria-label="工具箱">
                  <svg width="14" height="14" fill="#0a6fdc"><rect width="6" height="6" rx="1" /><rect y="7.500" width="6" height="6" rx="1" /><rect x="7.500" y="7.500" width="6" height="6" rx="1" /><rect x="8.300" y=".8" width="4.500" height="4.500" rx="1" fill="none" stroke="#0a6fdc" strokeWidth="1.600" /></svg>
                </ImeKey>
              </Ime>
            </Canvas>
            <LayoutTabs>
              <LayoutTab $on>
                <TabShape width="67" height="20" aria-hidden="true"><path d="M0 0h67l-5 15q-1 4-4 4H10q-3 0-4-4z" fill="#000" /></TabShape>
                <TabText>模型</TabText>
              </LayoutTab>
              <LayoutTab>
                <TabShape width="67" height="20" aria-hidden="true"><path d="M2 0L1 5l5 10q1 4 4 4h47q3 0 4-4L66 .5H2z" fill="#fff" /><path d="M1 5l5 10q1 4 4 4h47q3 0 4-4L66 0" fill="none" stroke="#000" /></TabShape>
                <TabText>布局1</TabText>
              </LayoutTab>
            </LayoutTabs>
          </Workspace>
        </Body>

        <Status>
          <Cell $mono>x = 178910 y = 85144</Cell>
          <Cell $line />
          <Cell $line>模型中的标注比例:1</Cell>
          <Cell $line $center>
            <svg width="14" height="15" viewBox="0 0 14 15" fill="none" stroke={GOLD}><path d="M3 .5h10v9M13 12v2.500H.5V3L3 .5v3H.5M7 12h6M11 10l2 2-2 2" />{iconText("PDF", 7, 8.5, 5, GOLD)}</svg>
          </Cell>
          <Cell $line $center>
            <svg width="16" height="16" viewBox="0 0 16 16"><rect width="16" height="16" rx="2" fill="#0a94e0" /><path d="M2.500 11V5.500h2v2.500h-2M6.500 8h3M8 6.500v3M11 5.500h2.500v5H11z" fill="none" stroke="#fff" /></svg>
          </Cell>
          <Cell $line $center>
            <svg width="14" height="14" fill="none" stroke="#777"><path d="M.5.500h13v13H.5z" /><path d="M3 10.500h8" strokeWidth="2" /></svg>
          </Cell>
        </Status>
        <Taskbar>
          <TaskItem />
          <Clock>17:20</Clock>
        </Taskbar>
      </Window>
    </>
  );
}
